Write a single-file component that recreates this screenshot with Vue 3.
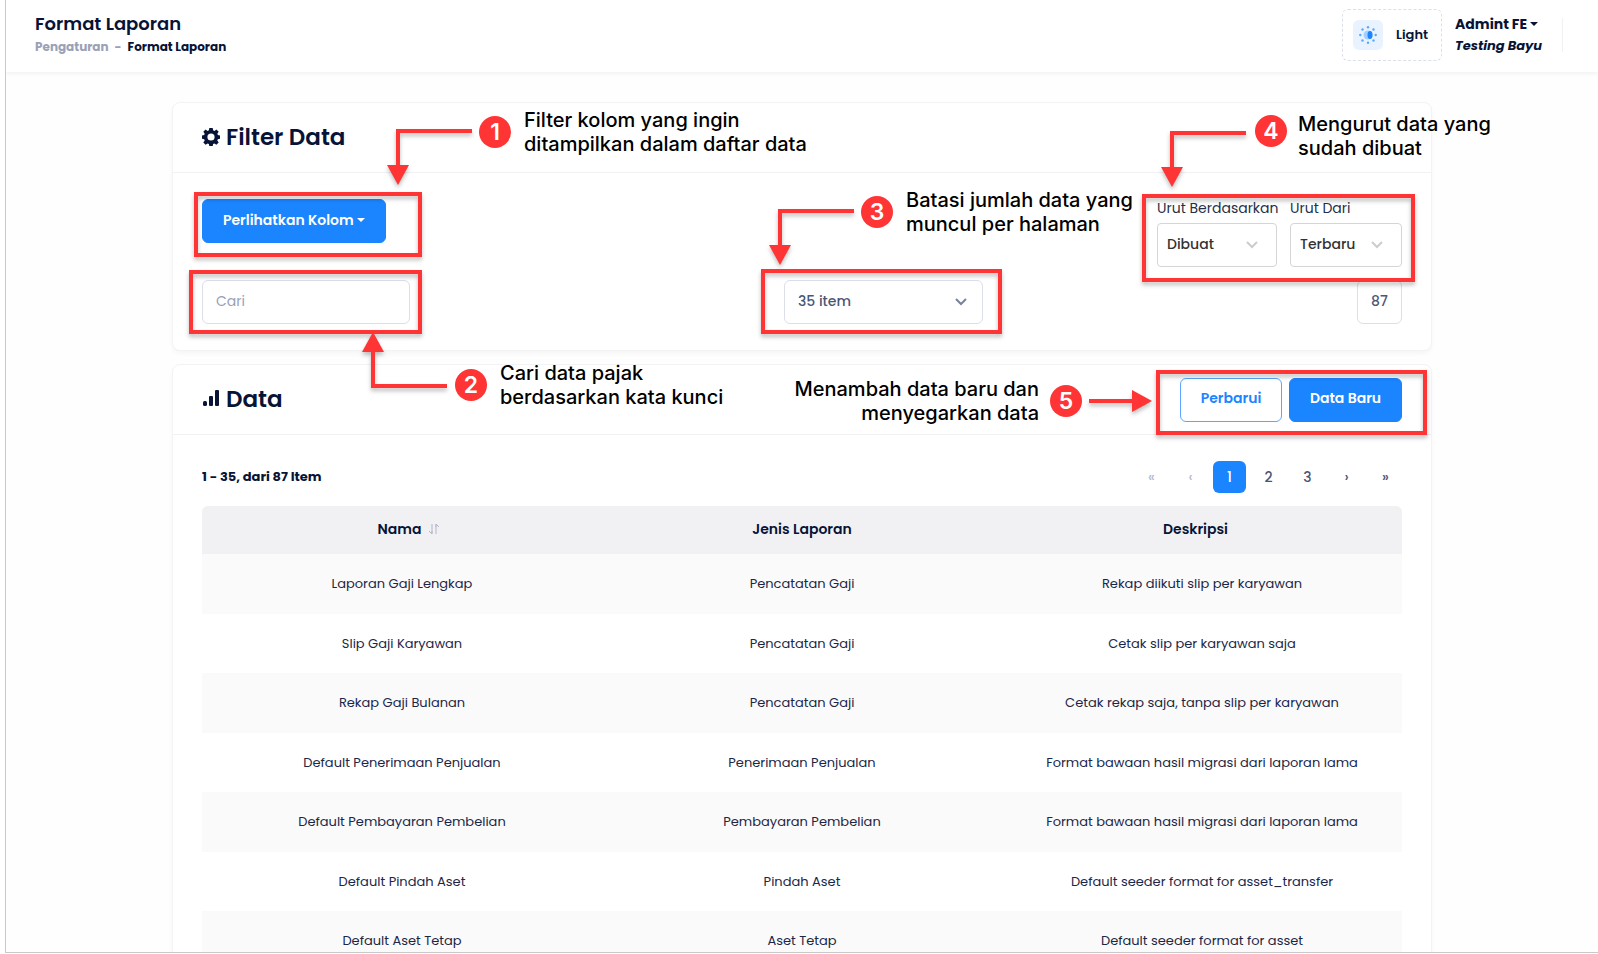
<script setup>
import { ref } from 'vue'

const search = ref('')
const perPage = ref('35 item')
const sortBy = ref('Dibuat')
const sortFrom = ref('Terbaru')

const rows = [
  ['Laporan Gaji Lengkap', 'Pencatatan Gaji', 'Rekap diikuti slip per karyawan'],
  ['Slip Gaji Karyawan', 'Pencatatan Gaji', 'Cetak slip per karyawan saja'],
  ['Rekap Gaji Bulanan', 'Pencatatan Gaji', 'Cetak rekap saja, tanpa slip per karyawan'],
  ['Default Penerimaan Penjualan', 'Penerimaan Penjualan', 'Format bawaan hasil migrasi dari laporan lama'],
  ['Default Pembayaran Pembelian', 'Pembayaran Pembelian', 'Format bawaan hasil migrasi dari laporan lama'],
  ['Default Pindah Aset', 'Pindah Aset', 'Default seeder format for asset_transfer'],
  ['Default Aset Tetap', 'Aset Tetap', 'Default seeder format for asset'],
]

const pages = [
  { label: '«', kind: 'off' },
  { label: '‹', kind: 'off' },
  { label: '1', kind: 'active' },
  { label: '2', kind: '' },
  { label: '3', kind: '' },
  { label: '›', kind: '' },
  { label: '»', kind: '' },
]

const boxes = [
  { x: 24, y: 92, w: 224, h: 61 },
  { x: 19, y: 170, w: 229, h: 60 },
  { x: 591, y: 169, w: 237, h: 61 },
  { x: 972, y: 94, w: 269, h: 84 },
  { x: 986, y: 270, w: 267, h: 61 },
]
const arrows = [
  { line: 'M300 29H226V64', head: 'M215 63h22l-11 20z' },
  { line: 'M275 284H201V249', head: 'M190 250h22l-11-20z' },
  { line: 'M682 109H608V144', head: 'M597 143h22l-11 20z' },
  { line: 'M1074 31H1000V66', head: 'M989 65h22l-11 20z' },
  { line: 'M917 299H961', head: 'M960 288v22l20-11z' },
]
const badges = [
  { n: 1, x: 323, y: 30 },
  { n: 2, x: 299, y: 283 },
  { n: 3, x: 705, y: 110 },
  { n: 4, x: 1099, y: 29 },
  { n: 5, x: 894, y: 299 },
]
</script>

<template>
  <div class="page">
    <header class="topbar">
      <div>
        <h1 class="title">Format Laporan</h1>
        <nav class="crumbs">
          <a href="#" class="muted">Pengaturan</a><span class="muted">-</span><span>Format Laporan</span>
        </nav>
      </div>
      <div class="tools">
        <button type="button" class="theme">
          <span class="sun">
            <svg width="18" height="18" viewBox="0 0 18 18">
              <circle cx="9" cy="9" r="4.5" fill="#a4cfff" />
              <ellipse cx="11" cy="9" rx="2.5" ry="4" fill="#1b84ff" />
              <g fill="#5ba7ff">
                <circle cx="9" cy="1.3" r="1.2" /><circle cx="9" cy="16.7" r="1.2" />
                <circle cx="1.3" cy="9" r="1.2" /><circle cx="16.7" cy="9" r="1.2" />
                <circle cx="3.5" cy="3.5" r="1.2" /><circle cx="14.5" cy="3.5" r="1.2" />
                <circle cx="3.5" cy="14.5" r="1.2" /><circle cx="14.5" cy="14.5" r="1.2" />
              </g>
            </svg>
          </span>
          Light
        </button>
        <button type="button" class="user">
          <span class="name">Admint FE <i class="caret"></i></span>
          <em>Testing Bayu</em>
        </button>
      </div>
    </header>

    <main class="content">
      <section class="card">
        <div class="card-head">
          <h2>
            <svg width="18" height="18" viewBox="0 0 18 18">
              <path
                fill="#071437"
                fill-rule="evenodd"
                d="M7.3 0h3.4l.4 2.3 1.4.6 1.9-1.4 2.3 2.3-1.4 2 .6 1.3 2.1.4v3.2l-2.2.5-.5 1.3 1.4 2-2.3 2.3-2-1.4-1.3.6-.4 2.3H7.3l-.4-2.3-1.3-.6-2 1.4-2.3-2.3 1.4-2-.5-1.3L0 10.700V7.500l2.200-.4.5-1.300-1.400-2L3.600 1.500l2 1.400 1.300-.6zM9 5.400a3.600 3.600 0 1 0 0 7.200 3.600 3.600 0 0 0 0-7.200z"
              />
            </svg>
            Filter Data
          </h2>
        </div>
        <div class="filters">
          <div class="row top">
            <button type="button" class="btn primary columns">Perlihatkan Kolom <i class="caret"></i></button>
            <div class="sorts">
              <div class="field by">
                <label for="sort-by">Urut Berdasarkan</label>
                <div class="select sort">
                  <select id="sort-by" v-model="sortBy"><option>Dibuat</option></select>
                  <svg width="12" height="8" viewBox="0 0 12 8"><path d="M1 1l5 5 5-5" /></svg>
                </div>
              </div>
              <div class="field from">
                <label for="sort-from">Urut Dari</label>
                <div class="select sort">
                  <select id="sort-from" v-model="sortFrom"><option>Terbaru</option></select>
                  <svg width="12" height="8" viewBox="0 0 12 8"><path d="M1 1l5 5 5-5" /></svg>
                </div>
              </div>
            </div>
          </div>
          <div class="row">
            <input v-model="search" class="search" type="text" placeholder="Cari" aria-label="Cari" />
            <div class="select per-page">
              <select v-model="perPage" aria-label="Jumlah item"><option>35 item</option></select>
              <svg width="12" height="8" viewBox="0 0 12 8"><path d="M1 1l5 5 5-5" /></svg>
            </div>
            <output class="total">87</output>
          </div>
        </div>
      </section>

      <section class="card">
        <div class="card-head">
          <h2>
            <svg width="18" height="18" viewBox="0 0 18 18" fill="#071437">
              <rect x="1" y="11" width="4" height="5" rx="1.500" />
              <rect x="7" y="6" width="4" height="10" rx="1" />
              <rect x="13" y="0" width="4" height="16" rx="1" />
            </svg>
            Data
          </h2>
          <div class="actions">
            <button type="button" class="btn outline">Perbarui</button>
            <button type="button" class="btn primary">Data Baru</button>
          </div>
        </div>
        <div class="data">
          <div class="summary">
            <strong>1 - 35, dari 87 Item</strong>
            <nav class="pager" aria-label="Halaman">
              <button v-for="p in pages" :key="p.label" type="button" :class="p.kind" :disabled="p.kind === 'off'">
                {{ p.label }}
              </button>
            </nav>
          </div>
          <table>
            <thead>
              <tr>
                <th scope="col">
                  <span class="sortable">Nama
                    <svg width="12" height="12" viewBox="0 0 12 12">
                      <path d="M4 1v9.500M1 8l3 3V8M8 11V1.500M11 4L8 1v3" />
                    </svg>
                  </span>
                </th>
                <th scope="col">Jenis Laporan</th>
                <th scope="col">Deskripsi</th>
              </tr>
            </thead>
            <tbody>
              <tr v-for="row in rows" :key="row[0]">
                <td v-for="cell in row" :key="cell">{{ cell }}</td>
              </tr>
            </tbody>
          </table>
        </div>
      </section>

      <div class="guide">
        <svg width="1260" height="340" viewBox="0 0 1260 340">
          <g class="marks">
            <rect v-for="(b, i) in boxes" :key="i" :x="b.x" :y="b.y" :width="b.w" :height="b.h" />
            <g v-for="a in arrows" :key="a.line">
              <path :d="a.line" />
              <path :d="a.head" class="head" />
            </g>
          </g>
          <g v-for="b in badges" :key="b.n" class="badge">
            <circle :cx="b.x" :cy="b.y" r="16" />
            <text :x="b.x" :y="b.y + 8">{{ b.n }}</text>
          </g>
        </svg>
        <p class="note n1">Filter kolom yang ingin<br />ditampilkan dalam daftar data</p>
        <p class="note n2">Cari data pajak<br />berdasarkan kata kunci</p>
        <p class="note n3">Batasi jumlah data yang<br />muncul per halaman</p>
        <p class="note n4">Mengurut data yang<br />sudah dibuat</p>
        <p class="note n5">Menambah data baru dan<br />menyegarkan data</p>
      </div>
    </main>
  </div>
</template>

<style>
body {
  margin: 0;
  background: #fff;
}
</style>

<style scoped>
* {
  box-sizing: border-box;
}
.page {
  height: calc(100vh - 1px);
  margin-left: 5px;
  overflow: hidden;
  border-left: 1px solid #c9c9c9;
  border-bottom: 1px solid #c9c9c9;
  background: #fefefe;
  color: #071437;
  font-family: Poppins, Inter, "Open Sans", sans-serif;
  font-size: 13px;
}
button,
input,
select {
  font: inherit;
  color: inherit;
}
button {
  padding: 0;
  border: 0;
  background: none;
  cursor: pointer;
}
h1,
h2,
p {
  margin: 0;
}
.topbar {
  display: flex;
  justify-content: space-between;
  height: 72px;
  padding: 9px 35px 0 29px;
  box-shadow: 0 2px 4px rgba(0, 0, 0, 0.05);
  background: #fff;
}
.title {
  padding-top: 4px;
  font-size: 18px;
  font-weight: 600;
  line-height: 22px;
}
.crumbs {
  display: flex;
  gap: 6px;
  margin-top: 3px;
  font-size: 12px;
  font-weight: 700;
  line-height: 18px;
}
.muted {
  color: #99a1b7;
  font-weight: 700;
  text-decoration: none;
}
.tools {
  display: flex;
  align-items: flex-start;
  gap: 13px;
}
.theme {
  display: flex;
  align-items: center;
  gap: 13px;
  width: 100px;
  height: 52px;
  padding-left: 10px;
  border: 1px dashed #dbdfe9;
  border-radius: 6px;
  font-weight: 600;
}
.sun {
  display: grid;
  place-items: center;
  width: 30px;
  height: 30px;
  border-radius: 6px;
  background: #e9f3ff;
}
.user {
  display: flex;
  flex-direction: column;
  justify-content: center;
  width: 108px;
  height: 34px;
  margin-top: 9px;
  border-right: 1px solid #f1f1f4;
  font-size: 13px;
  font-weight: 700;
  line-height: 21px;
  text-align: left;
  white-space: nowrap;
}
.name {
  font-size: 14px;
}
.caret {
  display: inline-block;
  border: 4px solid transparent;
  border-top-color: currentColor;
  border-bottom: 0;
  vertical-align: 3px;
}
.content {
  position: relative;
  max-width: 1260px;
  margin: 30px auto 0;
}
.card {
  margin-bottom: 13px;
  border: 1px solid #f3f3f5;
  border-radius: 8px;
  background: #fff;
  box-shadow: 0 3px 4px rgba(0, 0, 0, 0.03);
}
.card-head {
  display: flex;
  align-items: center;
  justify-content: space-between;
  height: 70px;
  padding: 0 29px;
  border-bottom: 1px solid #f1f1f4;
}
h2 {
  display: flex;
  align-items: center;
  gap: 6px;
  padding-bottom: 2px;
  font-size: 23px;
  font-weight: 600;
  line-height: 32px;
}
.filters {
  padding: 26px 29px;
}
.row {
  display: flex;
  justify-content: space-between;
}
.top {
  margin-bottom: 13px;
}
.btn {
  height: 44px;
  padding-bottom: 2px;
  border: 1px solid #1b84ff;
  border-radius: 6px;
  font-size: 14px;
  font-weight: 600;
}
.primary {
  background: #1b84ff;
  color: #fff;
}
.outline {
  border-color: #5ba7ff;
  background: #fff;
  color: #1b84ff;
}
.columns {
  width: 184px;
}
.sorts {
  display: flex;
  gap: 13px;
}
.field label {
  display: block;
  margin-bottom: 6px;
  color: #252f4a;
  font-size: 14px;
  font-weight: 400;
  line-height: 18px;
  white-space: nowrap;
}
.select {
  position: relative;
}
.select select {
  width: 100%;
  height: 44px;
  padding: 0 13px 2px;
  appearance: none;
  border: 1px solid #dbdfe9;
  border-radius: 6px;
  background: #fff;
  color: #4b5675;
  font-size: 14px;
  font-weight: 500;
}
.select svg {
  position: absolute;
  top: 18px;
  right: 16px;
  fill: none;
  stroke: #78829d;
  stroke-width: 2;
  pointer-events: none;
}
.select.sort select {
  padding: 0 9px 2px;
  border-color: #d5d5d5;
  border-radius: 4px;
  color: #333;
}
.select.sort svg {
  right: 19px;
  stroke: #ccc;
}
.by {
  width: 120px;
}
.from {
  width: 112px;
}
.per-page {
  width: 199px;
}
.search {
  width: 208px;
  height: 44px;
  padding: 0 13px 2px;
  border: 1px solid #dbdfe9;
  border-radius: 6px;
  background: #fff;
  font-size: 14px;
}
.search::placeholder {
  color: #99a1b7;
  opacity: 1;
}
.total {
  display: grid;
  place-items: center;
  width: 45px;
  height: 44px;
  padding-bottom: 2px;
  border: 1px solid #dbdfe9;
  border-radius: 6px;
  color: #4b5675;
  font-size: 14px;
  font-weight: 500;
}
.actions {
  display: flex;
  gap: 7px;
}
.actions .outline {
  width: 102px;
}
.actions .primary {
  width: 113px;
}
.data {
  padding: 26px 29px;
}
.summary {
  display: flex;
  align-items: center;
  justify-content: space-between;
  height: 32px;
  margin-bottom: 13px;
}
.summary strong {
  font-size: 13px;
  font-weight: 700;
}
.pager {
  display: flex;
  gap: 6px;
}
.pager button {
  width: 33px;
  height: 32px;
  border-radius: 6px;
  color: #4b5675;
  font-size: 14px;
  font-weight: 500;
}
.pager .off {
  color: #b5bccd;
}
.pager .active {
  background: #1b84ff;
  color: #fff;
}
table {
  width: 100%;
  border-spacing: 0;
  table-layout: fixed;
  text-align: center;
}
th {
  height: 48px;
  padding: 0 0 2px;
  background: #f1f1f4;
  font-size: 14px;
  font-weight: 600;
}
th:first-child {
  padding-left: 14px;
  border-top-left-radius: 6px;
}
th:last-child {
  padding-right: 13px;
  border-top-right-radius: 6px;
}
.sortable {
  display: inline-flex;
  align-items: center;
  gap: 7px;
}
.sortable svg {
  fill: none;
  stroke: #b5b5c9;
  stroke-width: 1;
}
td {
  height: 59px;
  padding: 0;
  color: #1c2747;
  font-size: 13px;
}
tr:nth-child(odd) td {
  height: 60px;
  background: #fafafa;
}
.guide {
  position: absolute;
  inset: 0 0 auto;
  pointer-events: none;
}
.guide svg {
  display: block;
  overflow: visible;
}
.marks {
  fill: none;
  stroke: #ff3434;
  stroke-width: 4;
  filter: drop-shadow(0 3px 2px rgba(0, 0, 0, 0.25));
}
.head {
  fill: #ff3434;
  stroke: none;
}
.badge circle {
  fill: #ff3434;
}
.badge text {
  fill: #fff;
  font: 600 23px Inter, sans-serif;
  text-anchor: middle;
}
.note {
  position: absolute;
  color: #000;
  font: 550 20px/24px Inter, sans-serif;
  white-space: nowrap;
}
.n1 {
  top: 6px;
  left: 352px;
}
.n2 {
  top: 259px;
  left: 328px;
}
.n3 {
  top: 86px;
  left: 734px;
}
.n4 {
  top: 10px;
  left: 1126px;
}
.n5 {
  top: 275px;
  left: 621px;
  width: 246px;
  text-align: right;
}
</style>
